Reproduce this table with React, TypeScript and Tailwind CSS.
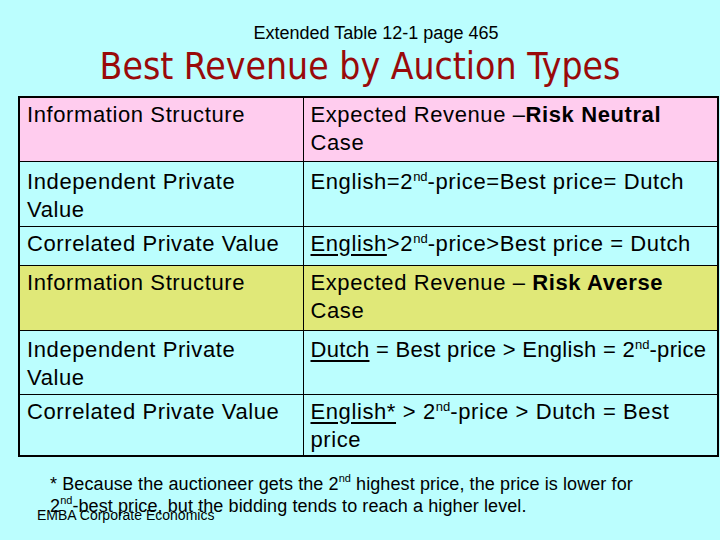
import React from "react";

const Sup: React.FC<{ children: React.ReactNode; className?: string }> = ({ children, className = "text-[13px] top-[-0.6em]" }) => (
  <sup className={`tracking-normal ${className}`}>{children}</sup>
);

const cell = "border border-black align-top px-[7px] pt-[3px] leading-[28px]";

export default function App() {
  return (
    <div
      className="relative w-[720px] h-[540px] overflow-hidden bg-[#bbfefe] text-black"
      style={{ fontFamily: '"Liberation Sans", Arial, sans-serif' }}
    >
      {/* heading */}
      <div className="pt-[22px] pl-[32px] text-center text-[18px] leading-[22px]">
        Extended Table 12-1 page 465
      </div>
      <h1
        className="pt-[2px] text-center text-[37px] leading-[42px] text-[#990a0a]"
        style={{ fontFamily: '"DejaVu Sans Condensed", "DejaVu Sans", sans-serif' }}
      >
        Best Revenue by Auction Types
      </h1>

      {/* table */}
      <table className="table-fixed mt-[8px] ml-[18px] w-[701px] border-collapse border-2 border-black text-[22px] tracking-[0.6px]">
        <colgroup>
          <col className="w-[284px]" />
          <col />
        </colgroup>
        <tbody>
          <tr className="h-[64px] bg-[#ffccee]">
            <td className={cell}>Information Structure</td>
            <td className={cell}>
              Expected Revenue –<b>Risk Neutral</b>
              <br />
              Case
            </td>
          </tr>
          <tr className="h-[65px]">
            <td className={`${cell} pt-[6px]`}>
              Independent Private
              <br />
              Value
            </td>
            <td className={`${cell} pt-[6px]`}>
              English=2<Sup>nd</Sup>-price=Best price= Dutch
            </td>
          </tr>
          <tr className="h-[39px]">
            <td className={cell}>Correlated Private Value</td>
            <td className={cell}>
              <span className="underline underline-offset-[3px]">English</span>&gt;2<Sup>nd</Sup>-price&gt;Best price = Dutch
            </td>
          </tr>
          <tr className="h-[65px] bg-[#e0e878]">
            <td className={cell}>Information Structure</td>
            <td className={cell}>
              Expected Revenue – <b>Risk Averse</b>
              <br />
              Case
            </td>
          </tr>
          <tr className="h-[64px]">
            <td className={`${cell} pt-[5px]`}>
              Independent Private
              <br />
              Value
            </td>
            <td className={`${cell} pt-[5px] pr-0 whitespace-nowrap tracking-[0.3px]`}>
              <span className="underline underline-offset-[3px]">Dutch</span> = Best price &gt; English = 2<Sup>nd</Sup>-price
            </td>
          </tr>
          <tr className="h-[62px]">
            <td className={cell}>Correlated Private Value</td>
            <td className={cell}>
              <span className="underline underline-offset-[3px]">English*</span> &gt; 2<Sup>nd</Sup>-price &gt; Dutch = Best
              <br />
              price
            </td>
          </tr>
        </tbody>
      </table>

      {/* footnote */}
      <p className="mt-[16px] pl-[50px] text-[18px] leading-[22px] tracking-[0.1px]">
        * Because the auctioneer gets the 2<Sup className="text-[11px] top-[-0.7em]">nd</Sup> highest price, the price is lower for
        <br />
        2<Sup className="text-[11px] top-[-0.7em]">nd</Sup>-best price, but the bidding tends to reach a higher level.
      </p>

      <div className="absolute left-[37px] top-[507px] text-[14px] leading-[16px]">EMBA Corporate Economics</div>
    </div>
  );
}
